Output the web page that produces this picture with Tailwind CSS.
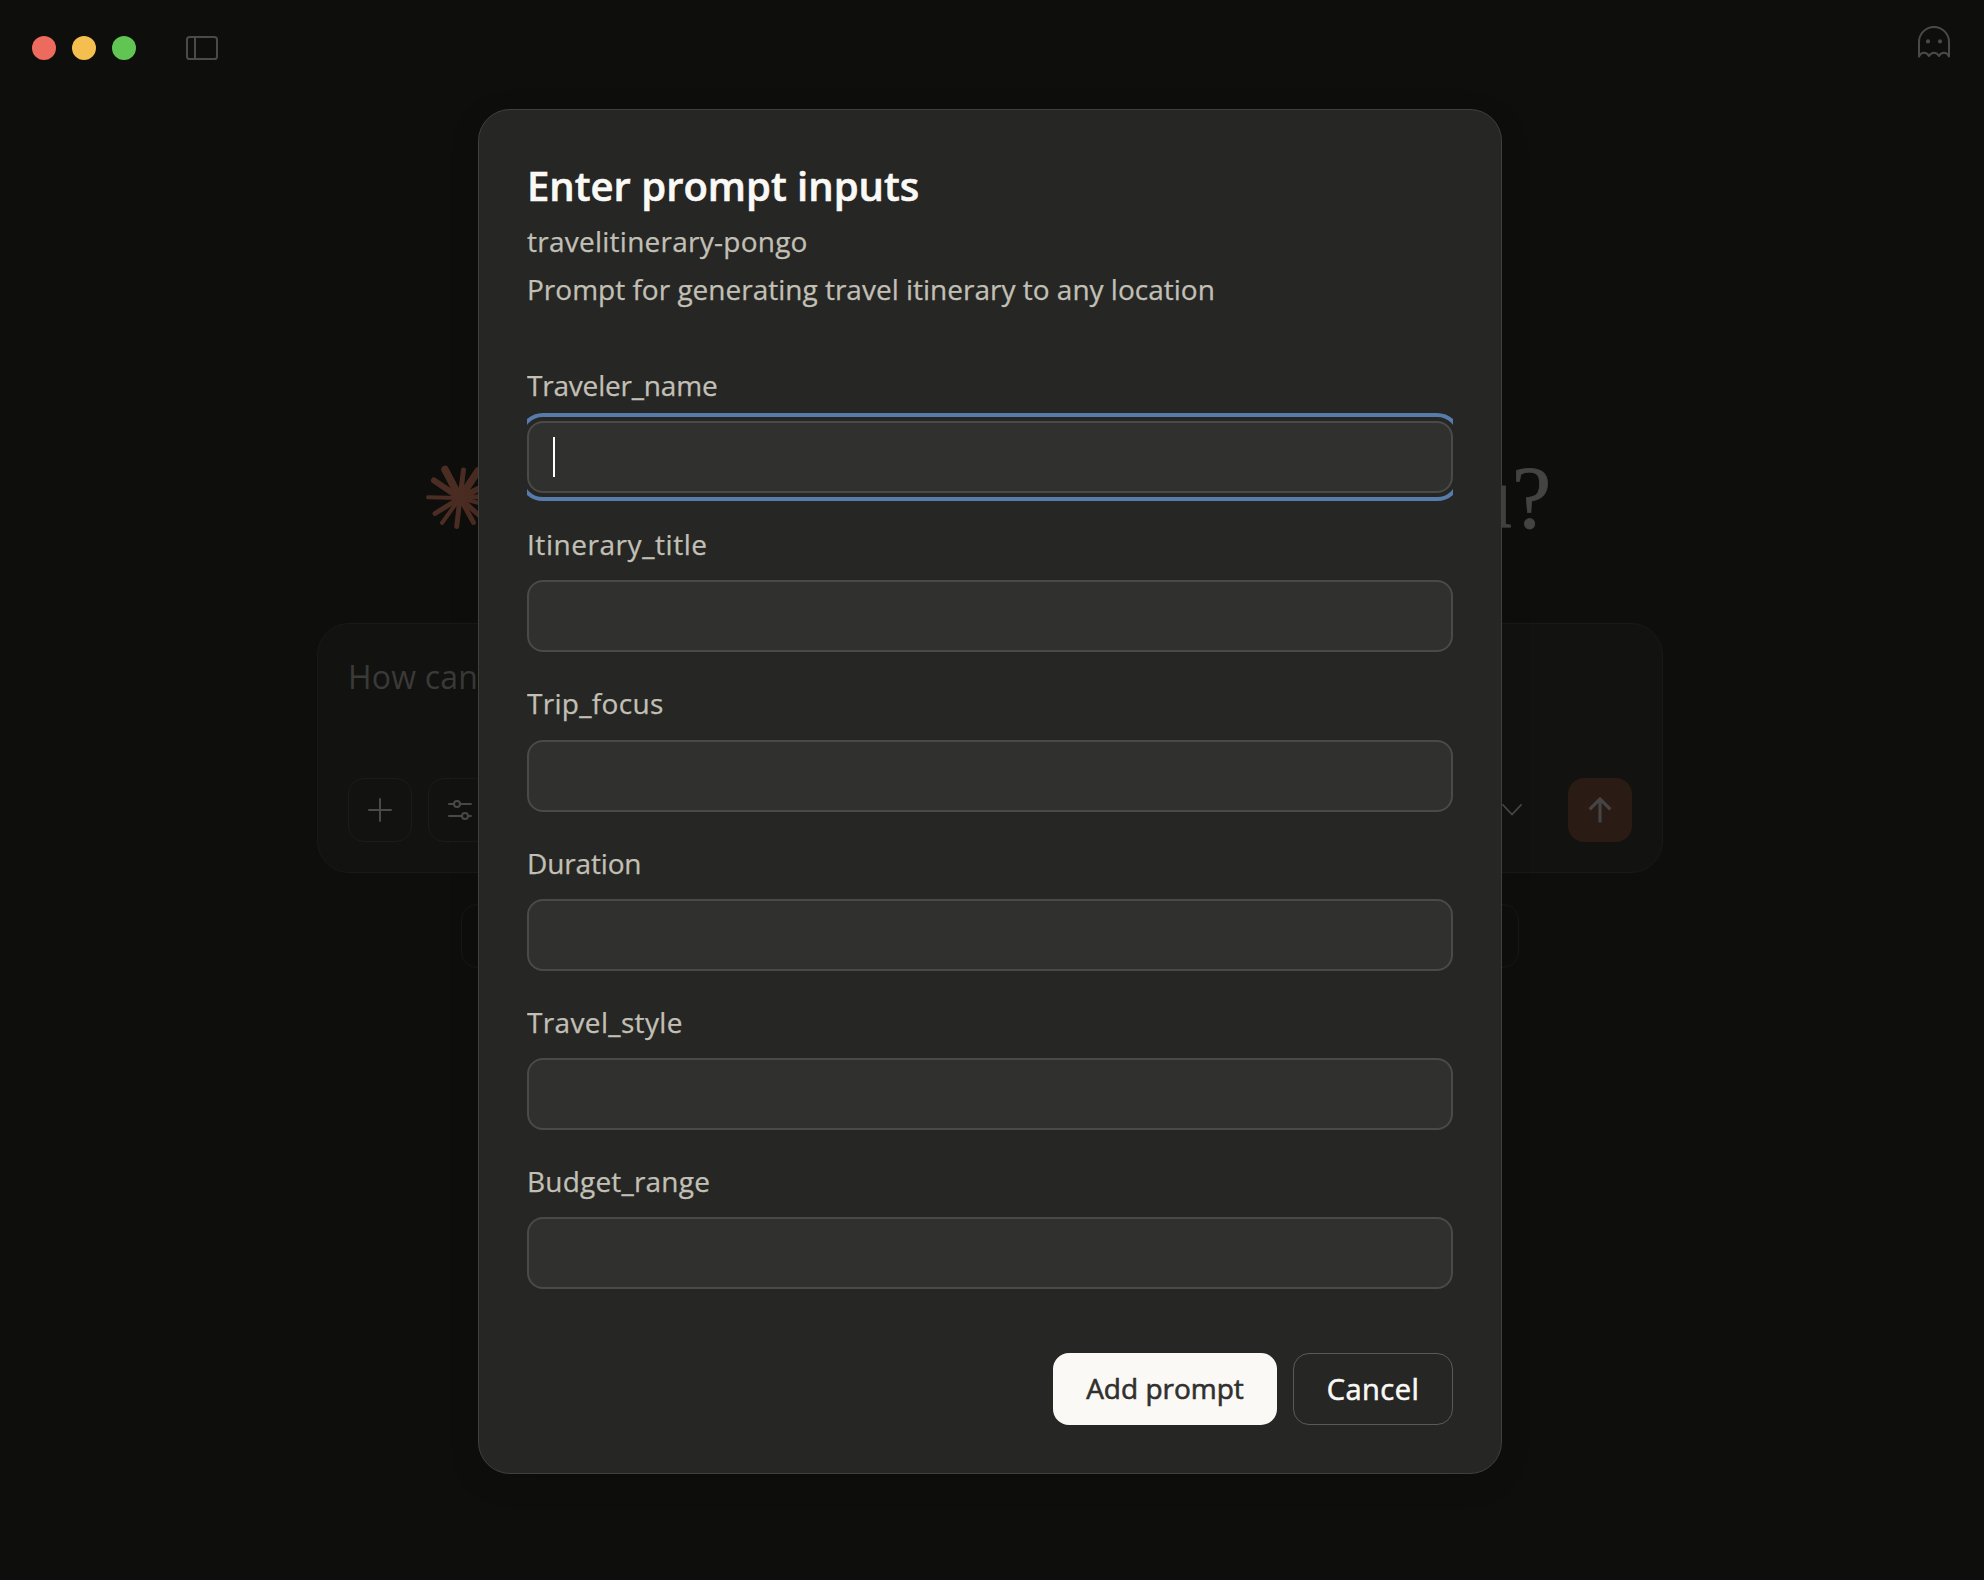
<!DOCTYPE html>
<html lang="en">
<head>
<meta charset="utf-8">
<title>Enter prompt inputs</title>
<script src="https://cdn.jsdelivr.net/npm/@tailwindcss/browser@4"></script>
</head>
<body class="relative h-[1580px] w-[1984px] overflow-hidden bg-[#0e0e0c] font-['Open_Sans',sans-serif]">

<!-- Window page behind the dialog -->
<div class="flex h-full flex-col items-center pr-1">
  <header class="flex w-full items-start justify-between pl-8 pr-7">
    <div class="flex items-center gap-4 pt-9">
      <span class="size-6 rounded-full bg-[#ed6a5e]"></span>
      <span class="size-6 rounded-full bg-[#f5bf4f]"></span>
      <span class="size-6 rounded-full bg-[#61c554]"></span>
      <svg class="ml-[34px] h-6 w-8" viewBox="0 0 32 24" fill="none" stroke="#4a4a48" stroke-width="2"><rect x="1" y="1" width="30" height="22" rx="2.6"/><path d="M9 1v22"/></svg>
    </div>
    <svg class="mt-[26px] mr-0.5 size-8" viewBox="0 0 32 32" fill="none" stroke="#4a4a48" stroke-width="2" stroke-linejoin="round"><path d="M1 30.6V16a15 15 0 0 1 30 0v14.6C29 25.6 23.4 25.6 21 30C18.6 25.6 13.4 25.6 11 30C8.6 25.6 3 25.6 1 30.6Z"/><circle cx="10" cy="15.4" r="2.1" fill="#4a4a48" stroke="none"/><circle cx="22" cy="15.4" r="2.1" fill="#4a4a48" stroke="none"/></svg>
  </header>

  <div class="mt-[406px] flex h-16 w-[1122px] items-center justify-between">
    <svg class="size-16 shrink-0" viewBox="-31 -32 64 64" stroke="#4c2d23" stroke-linecap="round" overflow="visible">
      <g stroke-width="7.5"><path d="M0 0L-15-28.5"/><path d="M0 0L18-27"/></g>
      <g stroke-width="6"><path d="M0 0L-26-17.5"/><path d="M0 0L28-14"/></g>
      <g stroke-width="5"><path d="M0 0L3.5-28"/><path d="M0 0L-25 15.5"/><path d="M0 0L-3.3 28.5"/><path d="M0 0L13.5 24.5"/><path d="M0 0L30-2"/><path d="M0 0L22 20"/></g>
      <g stroke-width="4"><path d="M0 0L-32-.8"/><path d="M0 0L-18 25"/><path d="M0 0L30 8"/></g>
      <circle r="8" fill="#4c2d23" stroke="none"/>
    </svg>
    <h1 class="font-['Liberation_Serif',serif] text-[88px] leading-[64px] text-[#444440] [-webkit-text-stroke:0.8px]">you?</h1>
  </div>

  <div class="mt-[93px] flex h-[250px] w-[1346px] flex-col justify-between rounded-[32px] border border-[#191917] bg-[#121210] p-[30px]">
    <p class="text-[32px] leading-[46px] tracking-[0.2px] text-[#3a3a38]">How can</p>
    <div class="flex items-center">
      <div class="flex size-16 items-center justify-center rounded-2xl border border-[#1b1b19]">
        <svg class="size-6" viewBox="0 0 24 24" stroke="#4a4a48" stroke-width="2" stroke-linecap="round"><path d="M12 1v22M1 12h22"/></svg>
      </div>
      <div class="ml-4 flex size-16 items-center justify-center rounded-2xl border border-[#1b1b19]">
        <svg class="size-6" viewBox="0 0 24 24" fill="none" stroke="#4a4a48" stroke-width="2" stroke-linecap="round"><path d="M1 6h4.8M12 6h11M1 18h12.8M20 18h3"/><circle cx="9" cy="6" r="3"/><circle cx="17" cy="18" r="3"/></svg>
      </div>
      <svg class="ml-auto mr-[46px] h-3 w-5" viewBox="0 0 20 12" fill="none" stroke="#4a4a48" stroke-width="1.8" stroke-linecap="round"><path d="M1 1l9 9.5L19 1"/></svg>
      <div class="flex size-16 items-center justify-center rounded-2xl bg-[#2b1b15]">
        <svg class="h-[26px] w-6" viewBox="0 0 24 26" fill="none" stroke="#444446" stroke-width="3.2"><path d="M12 25.4V2M1.6 12.4L12 2l10.4 10.4"/></svg>
      </div>
    </div>
  </div>

  <div class="mt-[31px] h-16 w-[1058px] rounded-2xl border border-[#171715]"></div>
</div>

<!-- Dialog -->
<div class="absolute inset-0 flex items-start justify-center pr-1 pt-[109px]">
  <section class="flex h-[1365px] w-[1024px] flex-col rounded-[32px] border border-[#40403e] bg-[#262624] p-12 text-[28px] text-[#c2c0b6] shadow-[0_8px_32px_rgba(0,0,0,0.12)] [-webkit-text-stroke:0.25px]">
    <h2 class="text-[40px] leading-[55px] font-semibold text-[#faf9f5] [-webkit-text-stroke:0.6px]">Enter prompt inputs</h2>
    <p class="mt-1 leading-[48px] tracking-[0.25px]">travelitinerary-pongo</p>
    <p class="leading-[48px]">Prompt for generating travel itinerary to any location</p>

    <div class="mt-[53px] flex flex-col gap-8 overflow-x-clip leading-[39.2px]">
      <div class="flex flex-col gap-4">
        <label class="tracking-[-0.2px]">Traveler_name</label>
        <div class="flex h-[72px] items-center rounded-2xl border-2 border-[#4a4a48] bg-[#30302e] pl-6 outline-4 outline-offset-4 outline-[#577cac]"><span class="h-10 w-0.5 bg-white"></span></div>
      </div>
      <div class="flex flex-col gap-4">
        <label class="tracking-[0.55px]">Itinerary_title</label>
        <div class="h-[72px] rounded-2xl border-2 border-[#4a4a48] bg-[#30302e]"></div>
      </div>
      <div class="flex flex-col gap-4">
        <label class="tracking-[0.3px]">Trip_focus</label>
        <div class="h-[72px] rounded-2xl border-2 border-[#4a4a48] bg-[#30302e]"></div>
      </div>
      <div class="flex flex-col gap-4">
        <label class="tracking-[-0.15px]">Duration</label>
        <div class="h-[72px] rounded-2xl border-2 border-[#4a4a48] bg-[#30302e]"></div>
      </div>
      <div class="flex flex-col gap-4">
        <label class="tracking-[0.35px]">Travel_style</label>
        <div class="h-[72px] rounded-2xl border-2 border-[#4a4a48] bg-[#30302e]"></div>
      </div>
      <div class="flex flex-col gap-4">
        <label class="tracking-[0.2px]">Budget_range</label>
        <div class="h-[72px] rounded-2xl border-2 border-[#4a4a48] bg-[#30302e]"></div>
      </div>
    </div>

    <div class="mt-auto flex justify-end gap-4 font-medium [-webkit-text-stroke:0.6px]">
      <button class="h-[72px] w-56 rounded-2xl bg-[#faf9f5] pb-0.5 text-[#30302e]">Add prompt</button>
      <button class="h-[72px] w-40 rounded-2xl border border-[#5a5a58] text-[29px] tracking-[0.5px] text-[#faf9f5]">Cancel</button>
    </div>
  </section>
</div>
</body>
</html>
